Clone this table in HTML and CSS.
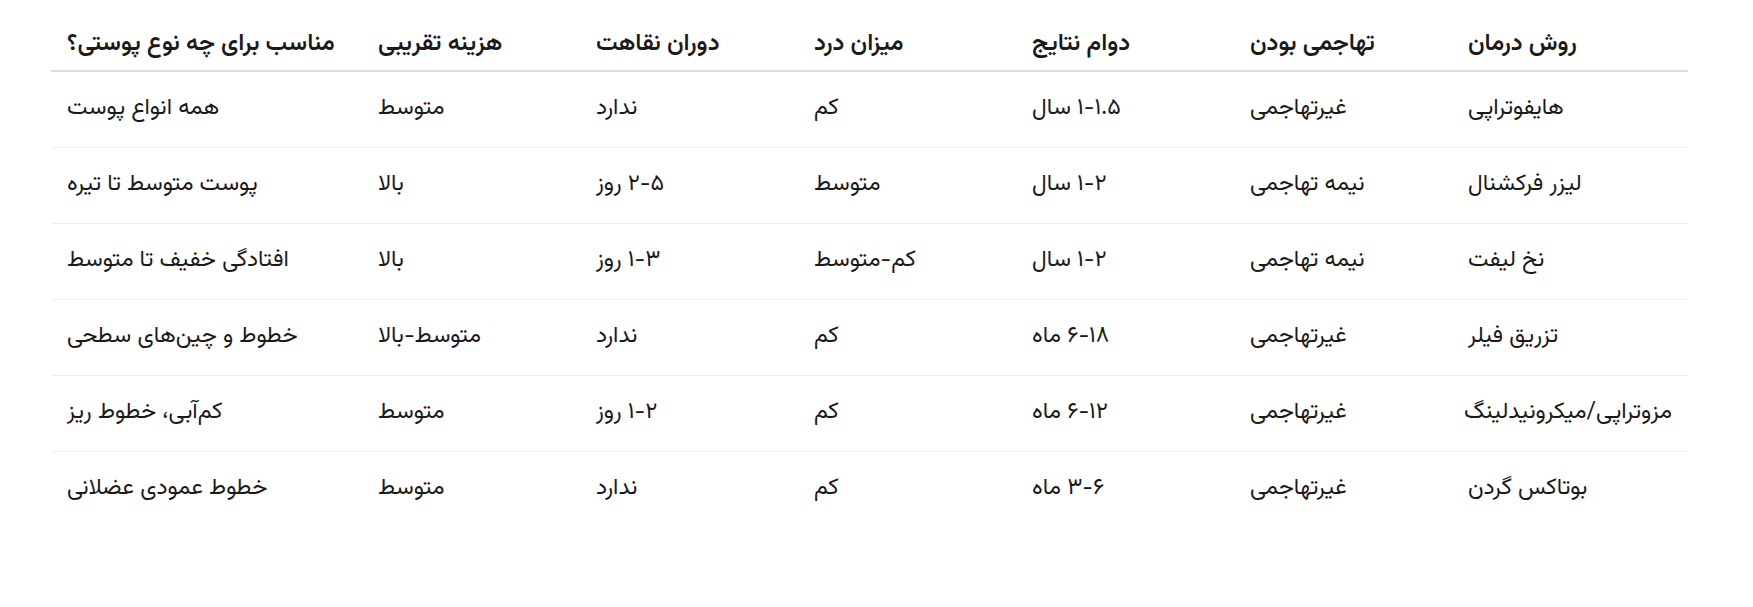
FILE: index.html
```html
<!DOCTYPE html>
<html lang="fa" dir="rtl">
<head>
<meta charset="utf-8">
<title>مقایسه روش‌های درمان</title>
<link rel="stylesheet" href="styles.css">
</head>
<body>
<div class="page">
  <table class="compare">
    <colgroup>
      <col class="c-method">
      <col class="c-mid">
      <col class="c-mid">
      <col class="c-mid">
      <col class="c-mid">
      <col class="c-mid">
      <col class="c-skin">
    </colgroup>
    <thead>
      <tr>
        <th>روش درمان</th>
        <th>تهاجمی بودن</th>
        <th>دوام نتایج</th>
        <th>میزان درد</th>
        <th>دوران نقاهت</th>
        <th>هزینه تقریبی</th>
        <th>مناسب برای چه نوع پوستی؟</th>
      </tr>
    </thead>
    <tbody>
      <tr>
        <td>هایفوتراپی</td>
        <td>غیرتهاجمی</td>
        <td>۱-۱.۵ سال</td>
        <td>کم</td>
        <td>ندارد</td>
        <td>متوسط</td>
        <td>همه انواع پوست</td>
      </tr>
      <tr>
        <td>لیزر فرکشنال</td>
        <td>نیمه تهاجمی</td>
        <td>۱-۲ سال</td>
        <td>متوسط</td>
        <td>۲-۵ روز</td>
        <td>بالا</td>
        <td>پوست متوسط تا تیره</td>
      </tr>
      <tr>
        <td>نخ لیفت</td>
        <td>نیمه تهاجمی</td>
        <td>۱-۲ سال</td>
        <td>کم-متوسط</td>
        <td>۱-۳ روز</td>
        <td>بالا</td>
        <td>افتادگی خفیف تا متوسط</td>
      </tr>
      <tr>
        <td>تزریق فیلر</td>
        <td>غیرتهاجمی</td>
        <td>۶-۱۸ ماه</td>
        <td>کم</td>
        <td>ندارد</td>
        <td>متوسط-بالا</td>
        <td>خطوط و چین‌های سطحی</td>
      </tr>
      <tr>
        <td>مزوتراپی/میکرونیدلینگ</td>
        <td>غیرتهاجمی</td>
        <td>۶-۱۲ ماه</td>
        <td>کم</td>
        <td>۱-۲ روز</td>
        <td>متوسط</td>
        <td>کم‌آبی، خطوط ریز</td>
      </tr>
      <tr>
        <td>بوتاکس گردن</td>
        <td>غیرتهاجمی</td>
        <td>۳-۶ ماه</td>
        <td>کم</td>
        <td>ندارد</td>
        <td>متوسط</td>
        <td>خطوط عمودی عضلانی</td>
      </tr>
    </tbody>
  </table>
</div>
</body>
</html>
```

FILE: styles.css
```css
html, body {
  margin: 0;
  padding: 0;
  background: #ffffff;
}

body {
  font-family: "Vazirmatn", "Noto Sans Arabic", "Noto Naskh Arabic", "DejaVu Sans", sans-serif;
  color: #1a1a1a;
  font-size: 23px;
}

.page {
  padding: 22px 0 0 0;
  margin-right: 65px;
  margin-left: 51px;
}

.compare {
  width: 1637px;
  border-collapse: collapse;
  table-layout: fixed;
}

.c-method { width: 236px; }
.c-mid { width: 218px; }
.c-skin { width: 311px; }

.compare th,
.compare td {
  text-align: left;
  padding: 0 16px;
  white-space: nowrap;
}

.compare th {
  font-size: 24px;
  font-weight: 600;
  line-height: 24px;
  padding-top: 10px;
  padding-bottom: 14px;
  border-bottom: 2px solid #dcdcdc;
}

.compare td {
  font-weight: 400;
  line-height: 27px;
  padding-top: 23px;
  padding-bottom: 25px;
  border-bottom: 1px solid #f0f0f0;
}

.compare tbody tr:last-child td {
  border-bottom: none;
}
```
